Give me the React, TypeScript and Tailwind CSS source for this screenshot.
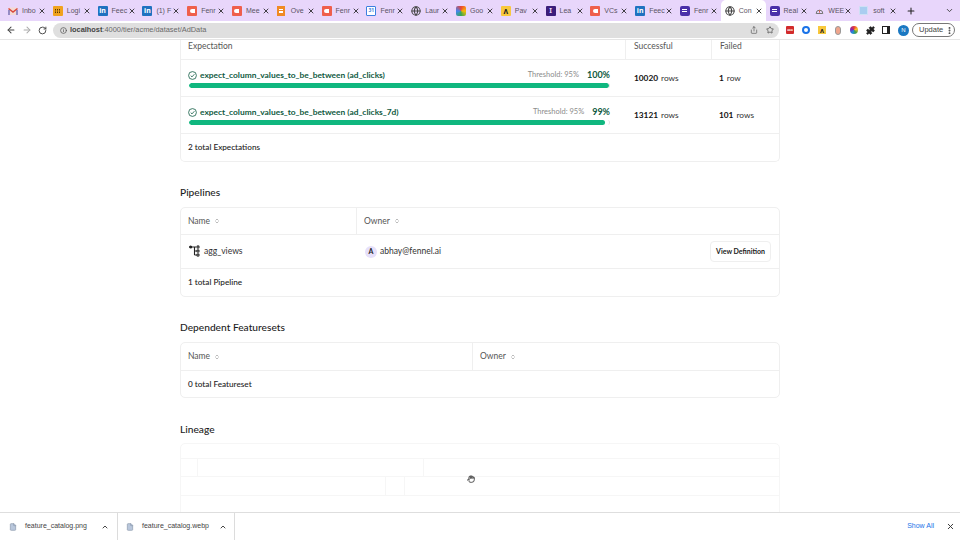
import { ArrowLeft, ArrowRight, RotateCw, Info, Share, Star, Puzzle, EllipsisVertical, X, Plus, ChevronDown, ChevronUp, Globe, ChevronsUpDown, Hand, File } from "lucide-react";

const font = "font-['Lato','Liberation_Sans',sans-serif]";

function Favicon({ kind }: { kind: string }) {
  if (kind === "gmail")
    return (
      <svg viewBox="0 0 10 10" className="h-[10px] w-[10px]">
        <rect x="0.5" y="1.5" width="9" height="7.5" rx="1" fill="#f4d9d4" />
        <path d="M0.5 2.5 5 6l4.5-3.5" fill="none" stroke="#d9473c" strokeWidth="1.5" />
        <path d="M1 9V4M9 9V4" stroke="#6f6bb8" strokeWidth="1.4" />
      </svg>
    );
  if (kind === "logi")
    return (
      <svg viewBox="0 0 10 10" className="h-[10px] w-[10px]">
        <rect width="10" height="10" rx="1" fill="#f0a21e" />
        <path d="M2 3.5h6M2 5h6M2 6.5h6" stroke="#5a3a00" strokeWidth="1" strokeDasharray="1 1" />
      </svg>
    );
  if (kind === "in")
    return (
      <div className="flex h-[10px] w-[10px] items-center justify-center rounded-[1px] bg-[#1f72c0] text-[7px] font-bold leading-none text-white">
        in
      </div>
    );
  if (kind === "fen")
    return (
      <div className="flex h-[10px] w-[10px] items-center justify-center rounded-[1px] bg-[#ef5f4c]">
        <div className="h-[4px] w-[5px] rounded-l-[2px] bg-white" />
      </div>
    );
  if (kind === "ove")
    return (
      <div className="flex h-[10px] w-[8px] flex-col items-center justify-center gap-[1px] bg-[#f08a24]">
        <div className="h-[1px] w-[4px] bg-white" />
        <div className="h-[2px] w-[4px] bg-white" />
      </div>
    );
  if (kind === "cal")
    return (
      <div className="flex h-[10px] w-[10px] items-center justify-center rounded-[1px] border border-[#3c7fe0] bg-white text-[5px] font-bold leading-none text-[#3c7fe0]">
        31
      </div>
    );
  if (kind === "globe") return <Globe className="h-[10px] w-[10px] text-[#444]" strokeWidth={2.5} />;
  if (kind === "goo")
    return <div className="h-[10px] w-[10px] rounded-[2px] bg-[conic-gradient(#ea4335,#fbbc04,#34a853,#4285f4,#ea4335)]" />;
  if (kind === "pav")
    return (
      <div className="flex h-[10px] w-[10px] items-center justify-center rounded-[1px] bg-[#f8c83c] text-[8px] font-bold leading-none text-[#222]">
        ʌ
      </div>
    );
  if (kind === "lea")
    return (
      <div className="flex h-[10px] w-[10px] items-center justify-center rounded-[1px] bg-[#3b1d7a] text-[7px] font-bold leading-none text-[#e8d5fa]">
        I
      </div>
    );
  if (kind === "fenp")
    return (
      <div className="flex h-[10px] w-[10px] flex-col items-center justify-center gap-[1px] rounded-[2px] bg-[#4a2fa8]">
        <div className="h-[1px] w-[5px] bg-white" />
        <div className="h-[1px] w-[5px] bg-white" />
      </div>
    );
  if (kind === "wee")
    return (
      <svg viewBox="0 0 12 12" className="h-[10px] w-[11px]" fill="none" stroke="#777" strokeWidth="1.2">
        <path d="M2 9a4 4 0 1 1 8 0z" />
        <path d="M6 5v3" stroke="#d6604d" />
      </svg>
    );
  return <div className="h-[9px] w-[9px] rounded-[1px] border border-[#cfe0f5] bg-[#a9cdf0]" />;
}

const tabs = [
  ["gmail", "Inbo"],
  ["logi", "Logi"],
  ["in", "Feec"],
  ["in", "(1) F"],
  ["fen", "Fenr"],
  ["fen", "Mee"],
  ["ove", "Ove"],
  ["fen", "Fenr"],
  ["cal", "Fenr"],
  ["globe", "Laur"],
  ["goo", "Goo"],
  ["pav", "Pav"],
  ["lea", "Lea"],
  ["fen", "VCs"],
  ["in", "Feec"],
  ["fenp", "Fenr"],
  ["globe", "Con"],
  ["fenp", "Real"],
  ["wee", "WEE"],
  ["soft", "soft"],
];

function TabBar() {
  return (
    <div className="flex h-[21px] items-center bg-[#e8d6fb] pl-[4px]">
      {tabs.map(([kind, label], i) => {
        const active = i === 16;
        const hideDivider = active || i === 15;
        return (
          <div
            key={i}
            className={`flex h-[21px] w-[44.8px] shrink-0 items-center pl-[4px] pr-[3px] ${
              active ? "rounded-t-[5px] bg-white" : ""
            }`}
          >
            <div className="flex w-[14px] shrink-0 items-center">
              <Favicon kind={kind} />
            </div>
            <span className="w-[13px] shrink-0 whitespace-nowrap text-[7px] leading-none text-[#5a5464] [font-family:'Liberation_Sans',sans-serif]">
              {label}
            </span>
            <X className="ml-[3px] h-[8px] w-[8px] shrink-0 text-[#222]" strokeWidth={2.5} />
            <div className={`ml-auto h-[11px] w-px ${hideDivider ? "" : "bg-[#b7a7c7]"}`} />
          </div>
        );
      })}
      <Plus className="ml-[6px] h-[10px] w-[10px] text-[#222]" strokeWidth={2.5} />
      <ChevronDown className="ml-[29px] h-[9px] w-[9px] text-[#444]" strokeWidth={2.5} />
    </div>
  );
}

function Toolbar() {
  return (
    <div className="flex h-[19px] items-center border-b border-[#e5e5e5] bg-white pl-[6px] pr-[5px]">
      <ArrowLeft className="h-[10px] w-[10px] text-[#444]" strokeWidth={2.5} />
      <ArrowRight className="ml-[6px] h-[10px] w-[10px] text-[#aaa]" strokeWidth={2.5} />
      <RotateCw className="ml-[6px] h-[9px] w-[9px] text-[#444]" strokeWidth={2.5} />
      <div className="ml-[6px] flex h-[15px] w-[726px] shrink-0 items-center rounded-full bg-[#dfdfdf] pl-[7px] pr-[5px] text-[7.4px] text-[#6a6a6a] [font-family:'Liberation_Sans',sans-serif]">
        <Info className="h-[7px] w-[7px] text-[#555]" strokeWidth={2.5} />
        <span className="ml-[3px]">
          <span className="font-bold text-[#444]">localhost</span>:4000/tier/acme/dataset/AdData
        </span>
        <Share className="ml-auto h-[8px] w-[8px] text-[#555]" />
        <Star className="ml-[8px] h-[8px] w-[8px] text-[#555]" strokeWidth={2.5} />
      </div>
      <div className="ml-[7px] flex h-[8px] w-[8px] items-center justify-center rounded-[1px] bg-[#d22b2b] text-[3px] font-bold text-white">
        ooo
      </div>
      <div className="ml-[8px] h-[8px] w-[8px] rounded-full border-2 border-[#1a73e8] bg-white" />
      <div className="ml-[8px] flex h-[8px] w-[8px] items-center justify-center bg-[#f8c83c] text-[7px] font-bold leading-none text-[#222]">
        ʌ
      </div>
      <div className="ml-[9px] h-[9px] w-[6px] rounded-full border border-[#999] bg-[#f0a58c]" />
      <div className="ml-[9px] h-[8px] w-[8px] rounded-full bg-[conic-gradient(#e53935,#fbc02d,#43a047,#1e88e5,#8e24aa,#e53935)]" />
      <Puzzle className="ml-[8px] h-[9px] w-[9px] fill-[#222] text-[#222]" />
      <div className="ml-[7px] h-[8px] w-[8px] border border-r-[3px] border-[#222]" />
      <div className="ml-[8px] flex h-[11px] w-[11px] items-center justify-center rounded-full bg-[#1a78c2] text-[6px] text-white [font-family:'Liberation_Sans',sans-serif]">
        N
      </div>
      <div className="ml-[3px] flex h-[14px] w-[43px] items-center justify-between rounded-full border border-[#777] pl-[6px] text-[7.5px] text-[#444] [font-family:'Liberation_Sans',sans-serif]">
        Update
        <EllipsisVertical className="h-[9px] w-[9px] text-[#444]" strokeWidth={3} />
      </div>
    </div>
  );
}

function CheckIcon() {
  return (
    <svg viewBox="0 0 9 9" className="-ml-px h-[9px] w-[9px] shrink-0" fill="none" stroke="#0f5a41" strokeWidth="0.8">
      <circle cx="4.5" cy="4.5" r="3.9" />
      <path d="M2.7 4.6 4 5.9l2.4-2.7" />
    </svg>
  );
}

function ExpectationRow({
  name,
  pct,
  barClass,
  ok,
  okUnit,
  bad,
  badUnit,
}: {
  name: string;
  pct: string;
  barClass: string;
  ok: string;
  okUnit: string;
  bad: string;
  badUnit: string;
}) {
  return (
    <div className="flex h-[37px] border-b border-[#efefef]">
      <div className="w-[444px] shrink-0 pl-[8px] pr-[15px] pt-[8px]">
        <div className="flex h-[14px] items-center">
          <CheckIcon />
          <span className="ml-[3px] text-[8.4px] font-bold text-[#0f5a41]">{name}</span>
          <span className="ml-auto text-[7.5px] text-[#8c8c8c]">Threshold: 95%</span>
          <span className="ml-[8px] text-[9px] font-bold text-[#0f5a41]">{pct}</span>
        </div>
        <div className="mt-[1px] h-[5px] w-full overflow-hidden rounded-full border-r border-[#e5e5e5]">
          <div className={`h-full rounded-full bg-[#10b77f] ${barClass}`} />
        </div>
      </div>
      <div className="flex w-[86px] shrink-0 items-center pl-[9px] text-[8.3px] text-[#333]">
        <span className="font-bold text-[#111]">{ok}</span>
        <span className="ml-[3px]">{okUnit}</span>
      </div>
      <div className="flex flex-1 items-center pl-[8px] text-[8.3px] text-[#333]">
        <span className="font-bold text-[#111]">{bad}</span>
        <span className="ml-[3px]">{badUnit}</span>
      </div>
    </div>
  );
}

function SortHead({ label, className }: { label: string; className: string }) {
  return (
    <div className={`flex items-center pl-[7px] text-[8.5px] text-[#555] ${className}`}>
      {label}
      <ChevronsUpDown className="ml-[4px] h-[6px] w-[6px] text-[#777]" />
    </div>
  );
}

function Heading({ children, className }: { children: string; className: string }) {
  return <div className={`text-[10.2px] font-medium leading-[14px] text-[#1c1c1c] ${className}`}>{children}</div>;
}

function Footer({ children }: { children: string }) {
  return <div className="flex h-[27px] items-center pl-[7px] text-[8.2px] font-medium text-[#222]">{children}</div>;
}

function PipelineIcon() {
  return (
    <svg viewBox="0 0 12 12" className="h-[12px] w-[12px]" fill="none" stroke="#222" strokeWidth="1.1">
      <circle cx="1.6" cy="2" r="1" fill="#222" />
      <path d="M2.6 2H7M5.5 2v8M5.5 6H8M5.5 10H8" />
      <circle cx="9" cy="2" r="1.1" />
      <circle cx="9" cy="6" r="1.1" />
      <circle cx="9" cy="10" r="1.1" />
    </svg>
  );
}

function Page() {
  return (
    <div className={`h-[472px] overflow-hidden bg-white ${font}`}>
      <div className="mx-auto w-[600px]">
        <div className="h-[122px] rounded-b-[5px] border-x border-b border-[#efefef]">
          <div className="flex h-[20px] border-b border-[#efefef] text-[8.5px] text-[#555]">
            <div className="flex w-[444px] items-center pb-[7px] pl-[7px]">Expectation</div>
            <div className="flex w-[86px] items-center border-l border-[#efefef] pb-[7px] pl-[8px]">Successful</div>
            <div className="flex flex-1 items-center border-l border-[#efefef] pb-[7px] pl-[8px]">Failed</div>
          </div>
          <ExpectationRow
            name="expect_column_values_to_be_between (ad_clicks)"
            pct="100%"
            barClass="w-full"
            ok="10020"
            okUnit="rows"
            bad="1"
            badUnit="row"
          />
          <ExpectationRow
            name="expect_column_values_to_be_between (ad_clicks_7d)"
            pct="99%"
            barClass="w-[99%]"
            ok="13121"
            okUnit="rows"
            bad="101"
            badUnit="rows"
          />
          <Footer>2 total Expectations</Footer>
        </div>

        <Heading className="mt-[23px]">Pipelines</Heading>
        <div className="mt-[8px] h-[90px] rounded-[5px] border border-[#efefef]">
          <div className="flex h-[27px] border-b border-[#efefef]">
            <SortHead label="Name" className="w-[176px] border-r border-[#efefef]" />
            <SortHead label="Owner" className="flex-1" />
          </div>
          <div className="flex h-[34px] items-center border-b border-[#efefef]">
            <div className="flex w-[176px] items-center pl-[8px] text-[8.6px] text-[#333]">
              <PipelineIcon />
              <span className="ml-[3px]">agg_views</span>
            </div>
            <div className="flex flex-1 items-center pl-[8px] text-[8.5px] text-[#333]">
              <div className="flex h-[12px] w-[12px] items-center justify-center rounded-full bg-[#e6e0fa] text-[7px] font-bold text-[#222]">
                A
              </div>
              <span className="ml-[3px]">abhay@fennel.ai</span>
              <button className="ml-auto mr-[8px] h-[21px] w-[61px] rounded-[4px] border border-[#efefef] text-[7px] font-bold text-[#222]">
                View Definition
              </button>
            </div>
          </div>
          <Footer>1 total Pipeline</Footer>
        </div>

        <Heading className="mt-[23px]">Dependent Featuresets</Heading>
        <div className="mt-[8px] h-[56px] rounded-[5px] border border-[#efefef]">
          <div className="flex h-[28px] border-b border-[#efefef]">
            <SortHead label="Name" className="w-[292px] border-r border-[#efefef]" />
            <SortHead label="Owner" className="flex-1" />
          </div>
          <Footer>0 total Featureset</Footer>
        </div>

        <Heading className="mt-[24px]">Lineage</Heading>
        <div className="relative mt-[7px] h-[90px] rounded-[5px] border border-[#f6f6f6]">
          <div className="flex h-[15px] border-b border-[#f6f6f6]" />
          <div className="flex h-[18px] border-b border-[#f6f6f6]">
            <div className="w-[17px] border-r border-[#f6f6f6]" />
            <div className="w-[226px] border-r border-[#f6f6f6]" />
          </div>
          <div className="flex h-[19px] border-b border-[#f6f6f6]">
            <div className="w-[205px] border-r border-[#f6f6f6]" />
            <div className="w-[19px] border-r border-[#f6f6f6]" />
          </div>
          {/* grabbing cursor, lies over the canvas */}
          <Hand className="absolute left-[286px] top-[31px] h-[8px] w-[8px] text-[#333]" strokeWidth={2.5} />
        </div>
      </div>
    </div>
  );
}

function DownloadItem({ name, className }: { name: string; className: string }) {
  return (
    <div className={`flex h-[28px] items-center border-r border-[#dcdcdc] ${className}`}>
      <File className="h-[8px] w-[8px] fill-[#b9c7dc] text-[#8a97ab]" />
      <span className="ml-[8px] text-[7px] text-[#444]">{name}</span>
      <ChevronUp className="ml-auto h-[8px] w-[8px] text-[#222]" strokeWidth={2.5} />
    </div>
  );
}

function DownloadBar() {
  return (
    <div className="flex h-[28px] items-center border-t border-[#dedede] bg-white [font-family:'Liberation_Sans',sans-serif]">
      <DownloadItem name="feature_catalog.png" className="w-[118px] pl-[9px] pr-[8px]" />
      <DownloadItem name="feature_catalog.webp" className="w-[117px] pl-[8px] pr-[7px]" />
      <span className="ml-auto text-[7px] text-[#1a73e8]">Show All</span>
      <X className="ml-[12px] mr-[5px] h-[9px] w-[9px] text-[#333]" strokeWidth={2.5} />
    </div>
  );
}

export default function App() {
  return (
    <div className="flex h-[540px] w-[960px] flex-col overflow-hidden bg-white">
      <TabBar />
      <Toolbar />
      <Page />
      <DownloadBar />
    </div>
  );
}
